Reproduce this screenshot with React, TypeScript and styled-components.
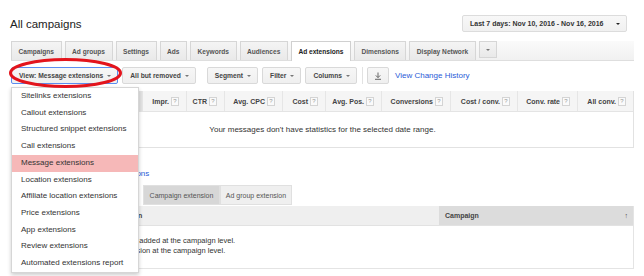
import React from 'react'
import styled, { createGlobalStyle } from 'styled-components'

const GlobalStyle = createGlobalStyle`
    body {
        margin: 0;
        background: #fff;
        font-family: "Liberation Sans", Arial, sans-serif;
        color: #333;
    }
`

const Page = styled.div`
    width: 644px;
    height: 276px;
    box-sizing: border-box;
    padding: 0 10px 0 11px;
    overflow: hidden;
`

const Header = styled.div`
    display: flex;
    justify-content: space-between;
    align-items: center;
    padding-top: 15px;
    height: 17px;
`

const Title = styled.h1`
    margin: 0 0 0 -1px;
    font-size: 11.5px;
    font-weight: normal;
    color: #222;
`

const DateButton = styled.div`
    display: flex;
    align-items: center;
    justify-content: space-between;
    box-sizing: border-box;
    width: 165px;
    height: 17px;
    margin-right: 7px;
    padding: 0 6px 0 7px;
    border: 1px solid #dcdcdc;
    border-radius: 2px;
    background: linear-gradient(#f8f8f8, #f0f0f0);
    font-size: 7px;
    font-weight: bold;
    color: #333;
`

const Caret = styled.span<{ $dark?: boolean; $size?: number }>`
    display: inline-block;
    width: 0;
    height: 0;
    border-left: ${p => p.$size ?? 2.5}px solid transparent;
    border-right: ${p => p.$size ?? 2.5}px solid transparent;
    border-top: ${p => (p.$size ?? 2.5) * 1.1}px solid ${p => (p.$dark ? '#222' : '#777')};
    margin-left: 4px;
`

const Tabs = styled.div`
    display: flex;
    gap: 3px;
    margin-top: 9px;
    height: 19px;
    background: linear-gradient(#fafafa, #f1f1f1);
    border-bottom: 1px solid #dedede;
`

const Tab = styled.div<{ $active?: boolean }>`
    display: flex;
    align-items: center;
    box-sizing: border-box;
    height: ${p => (p.$active ? 20 : 19)}px;
    padding: 0 6.5px;
    border: 1px solid ${p => (p.$active ? '#d0d0d0' : '#d6d6d6')};
    border-bottom: none;
    background: ${p => (p.$active ? '#fff' : 'linear-gradient(#f4f4f4, #e9e9e9)')};
    font-size: 6.6px;
    font-weight: bold;
    color: ${p => (p.$active ? '#222' : '#555')};
    white-space: nowrap;
`

const MoreTab = styled(Tab)`
    height: 17px;
    width: 18px;
    padding: 0;
    justify-content: center;
    border-bottom: 1px solid #d6d6d6;
    & > span {
        margin-left: 0;
    }
`

const Toolbar = styled.div`
    display: flex;
    align-items: center;
    margin-top: 6px;
    height: 17px;
`

const Group = styled.div<{ $gap?: number }>`
    display: flex;
    align-items: center;
    gap: 4px;
    margin-right: ${p => p.$gap ?? 0}px;
`

const ToolButton = styled.div<{ $focused?: boolean }>`
    display: flex;
    align-items: center;
    box-sizing: border-box;
    height: 17px;
    padding: 0 6px 0 7px;
    border: 1px solid ${p => (p.$focused ? '#5b8df0' : '#d9d9d9')};
    border-radius: 2px;
    background: linear-gradient(#f7f7f7, #efefef);
    font-size: 6.7px;
    font-weight: bold;
    color: #444;
    white-space: nowrap;
`

const IconButton = styled(ToolButton)`
    width: 22px;
    padding: 0;
    justify-content: center;
`

const Divider = styled.div`
    width: 1px;
    height: 17px;
    background: #e2e2e2;
    margin: 0 4px 0 5px;
`

const TextLink = styled.a`
    font-size: 8px;
    color: #2a5bd7;
    text-decoration: none;
    margin-left: 6px;
    white-space: nowrap;
`

const ViewWrap = styled.div`
    position: relative;
`

const Annotation = styled.svg`
    position: absolute;
    left: -4px;
    top: -10px;
    pointer-events: none;
    z-index: 12;
`

const Menu = styled.ul`
    position: absolute;
    left: 0;
    top: 20px;
    z-index: 10;
    width: 126px;
    margin: 0;
    padding: 0;
    list-style: none;
    background: #fff;
    border: 1px solid rgba(0, 0, 0, 0.16);
    box-shadow: 0 2px 4px rgba(0, 0, 0, 0.2);
`

const MenuItem = styled.li<{ $selected?: boolean }>`
    height: 16.72px;
    line-height: 16.72px;
    padding-left: 9px;
    font-size: 8px;
    color: #333;
    white-space: nowrap;
    background: ${p => (p.$selected ? '#f6b8b8' : 'transparent')};
`

const StatsTable = styled.div`
    margin-top: 7px;
    border: 1px solid #e2e2e2;
    border-top: none;
`

const StatsHead = styled.div`
    display: grid;
    grid-template-columns: 82px 49px 44px 38px 58px 43px 56px 69px 67px 60px 55px;
    height: 20px;
    background: #f5f5f5;
    border-bottom: 1px solid #e4e4e4;
`

const HeadCell = styled.div<{ $sorted?: boolean; $last?: boolean }>`
    display: flex;
    align-items: center;
    justify-content: flex-end;
    gap: 2px;
    padding-right: ${p => (p.$sorted ? 3 : 7)}px;
    border-right: ${p => (p.$last ? 'none' : '1px solid #e6e6e6')};
    background: ${p => (p.$sorted ? '#e3e3e3' : 'transparent')};
    font-size: 7px;
    font-weight: bold;
    color: #444;
    white-space: nowrap;
`

const Help = styled.span`
    display: inline-flex;
    align-items: center;
    justify-content: center;
    box-sizing: border-box;
    width: 8px;
    height: 9px;
    border: 1px solid #d4d4d4;
    background: #fafafa;
    font-size: 6px;
    font-weight: normal;
    color: #999;
`

const EmptyNote = styled.div`
    height: 35px;
    display: flex;
    align-items: center;
    justify-content: center;
    font-size: 8px;
    color: #333;
`

const LearnLink = styled.a`
    display: block;
    margin-top: 21px;
    line-height: 10px;
    font-size: 8px;
    color: #2a5bd7;
    text-decoration: none;
`

const LevelRow = styled.div`
    display: flex;
    align-items: center;
    margin-top: 6px;
`

const LevelLabel = styled.span`
    width: 132px;
    font-size: 7px;
    color: #555;
`

const Segment = styled.div<{ $selected?: boolean }>`
    display: flex;
    align-items: center;
    justify-content: center;
    box-sizing: border-box;
    height: 20px;
    width: ${p => (p.$selected ? 77 : 72)}px;
    border: 1px solid #e0e0e0;
    background: ${p => (p.$selected ? '#d7d7d7' : '#efefef')};
    font-size: 7px;
    color: #555;
`

const ExtTable = styled.div`
    margin-top: 1px;
    border: 1px solid #e4e4e4;
    border-top: none;
`

const ExtHead = styled.div`
    display: grid;
    grid-template-columns: 60px 1fr 194px;
    height: 19px;
    background: #efefef;
    border-bottom: 1px solid #e2e2e2;
`

const ExtHeadCell = styled.div<{ $sorted?: boolean }>`
    display: flex;
    align-items: center;
    justify-content: space-between;
    padding: 0 5px 0 6px;
    background: ${p => (p.$sorted ? '#dcdcdc' : 'transparent')};
    font-size: 7px;
    font-weight: bold;
    color: #444;
`

const ExtBody = styled.div`
    height: 42px;
    box-sizing: border-box;
    padding: 10px 0 0 8px;
    font-size: 7.5px;
    line-height: 9.5px;
    color: #333;
`

const DownloadIcon = () => (
    <svg width="8" height="8" viewBox="0 0 8 8">
        <path d="M4 0.5V5.5M1.8 3.4L4 5.6L6.2 3.4" stroke="#666" strokeWidth="1" fill="none" />
        <path d="M1 7.3H7" stroke="#666" strokeWidth="1" />
    </svg>
)

const menuItems = [
    'Sitelinks extensions',
    'Callout extensions',
    'Structured snippet extensions',
    'Call extensions',
    'Message extensions',
    'Location extensions',
    'Affiliate location extensions',
    'Price extensions',
    'App extensions',
    'Review extensions',
    'Automated extensions report',
]

const tabs = ['Campaigns', 'Ad groups', 'Settings', 'Ads', 'Keywords', 'Audiences', 'Ad extensions', 'Dimensions', 'Display Network']

const statColumns = ['Impr.', 'CTR', 'Avg. CPC', 'Cost', 'Avg. Pos.', 'Conversions', 'Cost / conv.', 'Conv. rate', 'All conv.']

const App = () => {
    return (
        <>
            <GlobalStyle />
            <Page>
                <Header>
                    <Title>All campaigns</Title>
                    <DateButton>
                        Last 7 days: Nov 10, 2016 - Nov 16, 2016
                        <Caret $dark $size={2.5} />
                    </DateButton>
                </Header>

                <Tabs>
                    {tabs.map(t => (
                        <Tab key={t} $active={t === 'Ad extensions'}>{t}</Tab>
                    ))}
                    <MoreTab><Caret $size={2} /></MoreTab>
                </Tabs>

                <Toolbar>
                    <Group $gap={11}>
                        <ViewWrap>
                            <ToolButton $focused>
                                View: Message extensions <Caret />
                            </ToolButton>
                            <Annotation width="118" height="34" viewBox="0 0 118 34">
                                <ellipse cx="58.5" cy="16" rx="55" ry="13.5" fill="none" stroke="#e3141c" strokeWidth="3" />
                            </Annotation>
                            <Menu>
                                {menuItems.map(m => (
                                    <MenuItem key={m} $selected={m === 'Message extensions'}>{m}</MenuItem>
                                ))}
                            </Menu>
                        </ViewWrap>
                        <ToolButton>All but removed <Caret /></ToolButton>
                    </Group>
                    <Group>
                        <ToolButton>Segment <Caret /></ToolButton>
                        <ToolButton>Filter <Caret /></ToolButton>
                        <ToolButton>Columns <Caret /></ToolButton>
                    </Group>
                    <Divider />
                    <IconButton><DownloadIcon /></IconButton>
                    <TextLink>View Change History</TextLink>
                </Toolbar>

                <StatsTable>
                    <StatsHead>
                        <HeadCell>Message</HeadCell>
                        <HeadCell $sorted>Clicks ↓</HeadCell>
                        {statColumns.map((c, i) => (
                            <HeadCell key={c} $last={i === statColumns.length - 1}>
                                {c} <Help>?</Help>
                            </HeadCell>
                        ))}
                    </StatsHead>
                    <EmptyNote>Your messages don't have statistics for the selected date range.</EmptyNote>
                </StatsTable>

                <LearnLink>Learn more about message extensions</LearnLink>

                <LevelRow>
                    <LevelLabel>Show:</LevelLabel>
                    <Segment $selected>Campaign extension</Segment>
                    <Segment>Ad group extension</Segment>
                </LevelRow>

                <ExtTable>
                    <ExtHead>
                        <ExtHeadCell />
                        <ExtHeadCell>Message extension</ExtHeadCell>
                        <ExtHeadCell $sorted>Campaign <span>↑</span></ExtHeadCell>
                    </ExtHead>
                    <ExtBody>
                        No message extensions have been added at the campaign level.<br />
                        You can also add a message extension at the campaign level.
                    </ExtBody>
                </ExtTable>
            </Page>
        </>
    )
}

export default App
